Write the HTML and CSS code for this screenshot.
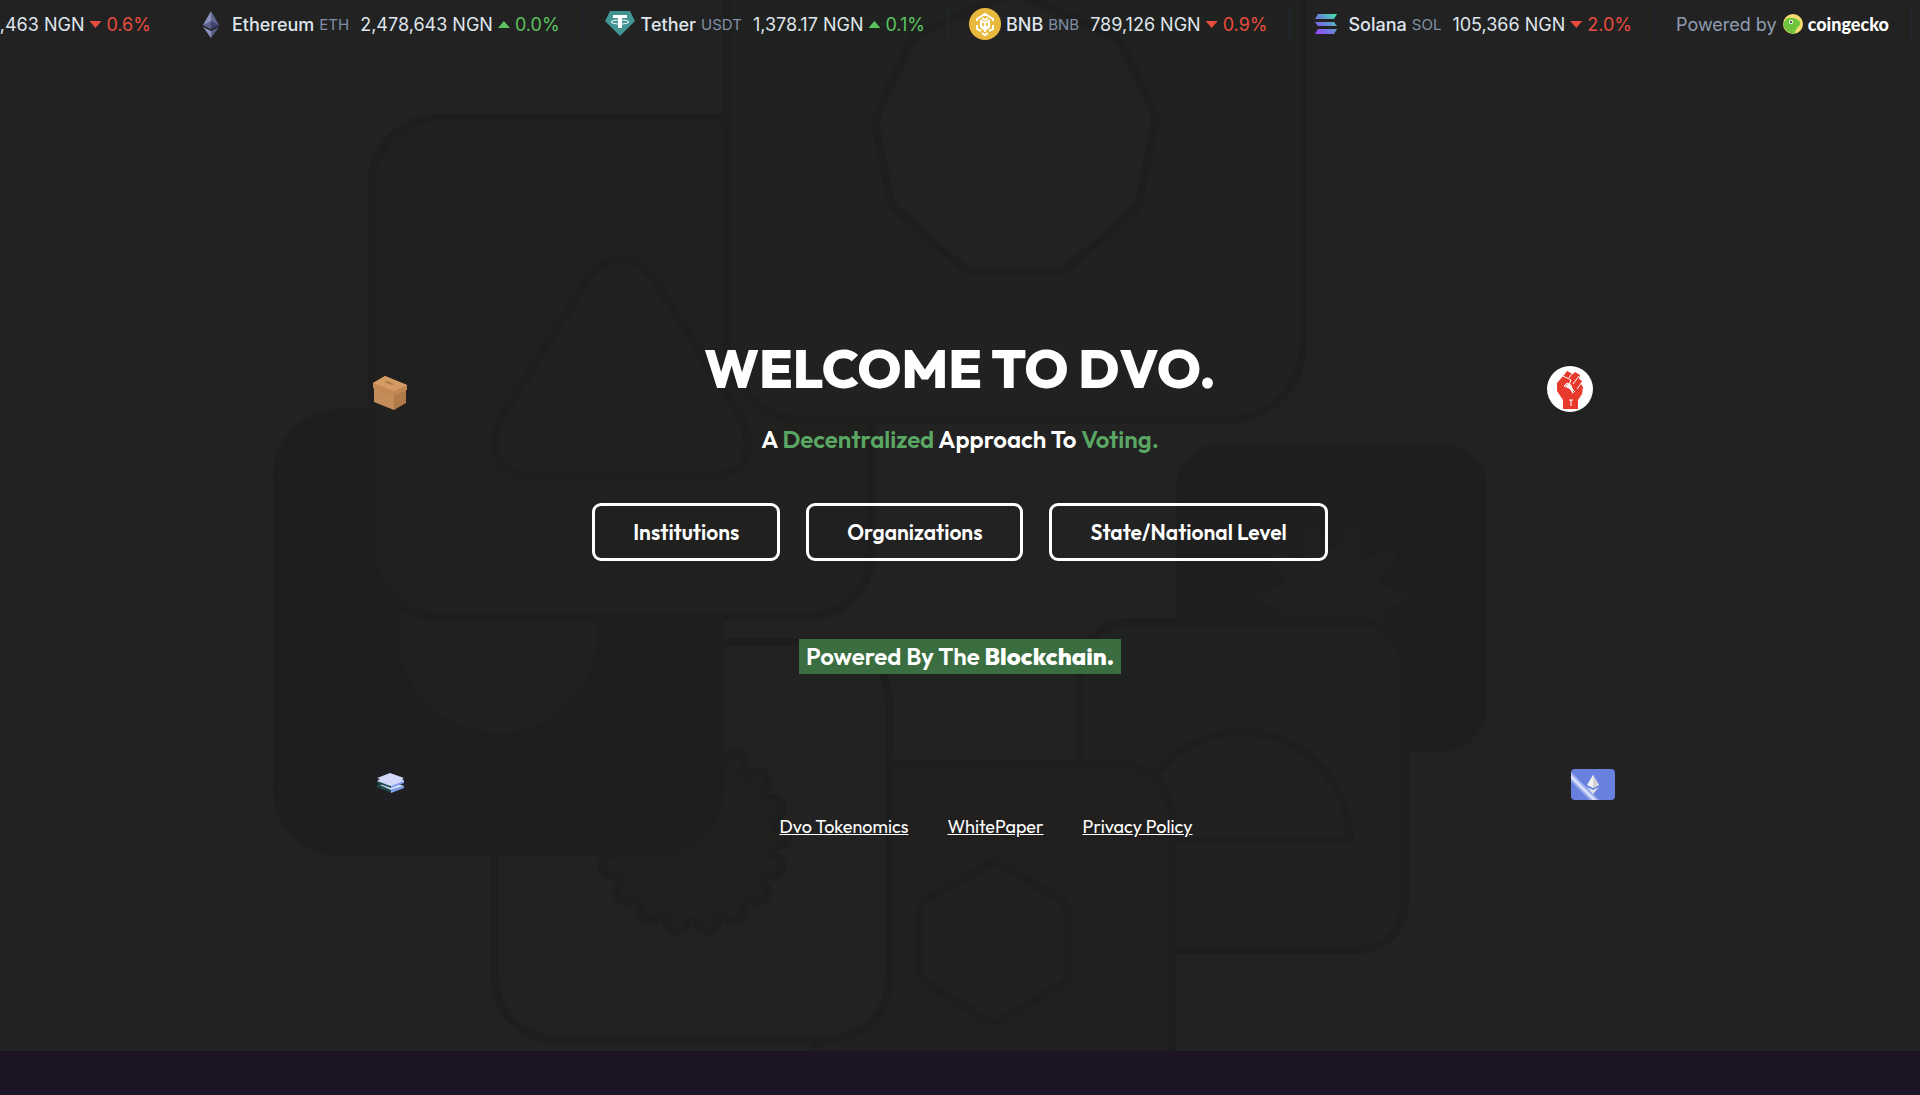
FILE: index.html
```html
<!DOCTYPE html>
<html lang="en">
<head>
    <meta charset="UTF-8">
    <meta name="viewport" content="width=device-width, initial-scale=1.0">
    <title>DVO</title>
    <link rel="stylesheet" href="styles.css">
</head>
<body>
    <div class="hero">
        <!-- background shapes -->
        <svg class="hero-bg" viewBox="0 0 1920 1051" preserveAspectRatio="xMidYMid slice" aria-hidden="true">
            <g stroke="#1e1e1e" stroke-width="8" stroke-linejoin="round">
                <rect x="1180" y="448" width="303" height="299" rx="40" fill="#1f1f1f"/>
                <polygon transform="translate(1332 598)" fill="#20201e" paint-order="stroke" points="84,0 46,15 68,49 28,39 26,80 0,48 -26,80 -28,39 -68,49 -46,15 -84,0 -46,-15 -68,-49 -28,-39 -26,-80 0,-48 26,-80 28,-39 68,-49 46,-15"/>
                <rect x="1080" y="622" width="325" height="328" rx="48" fill="#202221"/>
                <path d="M1134 841A108 109 0 0 1 1350 841Z" fill="#212121"/>
                <rect x="814" y="763" width="358" height="400" rx="56" fill="#21201e"/>
                <path d="M994 861L1062 900Q1067 904 1067 910V972Q1067 979 1062 983L1000 1021Q994 1024 988 1021L926 983Q920 979 920 972V910Q920 904 926 900Z" fill="#202221"/>
                <rect x="495" y="642" width="394" height="397" rx="60" fill="#222222"/>
                <g fill="none" stroke-linecap="round">
                    <circle cx="692" cy="837" r="86" pathLength="180" stroke-width="28" stroke-dasharray="0 10"/>
                    <circle cx="692" cy="837" r="83"/>
                    <circle cx="692" cy="837" r="85" pathLength="180" stroke="#20201e" stroke-width="14" stroke-dasharray="0 10"/>
                </g>
                <circle cx="692" cy="837" r="80" fill="#20201e" stroke="none"/>
                <rect x="277" y="413" width="443" height="439" rx="64" fill="#1f1f22"/>
                <circle cx="498" cy="633" r="104" fill="#202020"/>
                <rect x="372" y="118" width="500" height="499" rx="66" fill="#20201e"/>
                <path d="M586 282Q621 236 656 282L742 420Q762 474 708 476H534Q482 474 500 420Z" fill="#20221f"/>
                <rect x="727" y="-160" width="576" height="580" rx="76" fill="#20221f"/>
                <path d="M1015 -8L1112 35Q1120 42 1124 50L1153 110Q1156 116 1155 122L1140 198Q1139 206 1133 211L1070 266Q1064 271 1056 271H975Q967 271 961 266L898 211Q892 206 890 198L876 128Q875 120 878 112L907 50Q911 40 919 33Z" fill="#222222"/>
            </g>
        </svg>

        <header class="ticker">
            <a class="coin" href="#">
                <span class="price">2,463 NGN</span>
                <span class="change down">0.6%</span>
            </a>
            <a class="coin" href="#">
                <svg class="coin-icon" viewBox="0 0 32 32" aria-hidden="true">
                    <path d="M16 3L8 17L16 21Z" fill="#8a92bd"/>
                    <path d="M16 3L24 17L16 21Z" fill="#62688f"/>
                    <path d="M8 17L16 13V21Z" fill="#5a6088"/>
                    <path d="M24 17L16 13V21Z" fill="#3d4270"/>
                    <path d="M8 19L16 23V30Z" fill="#8a92bd"/>
                    <path d="M24 19L16 23V30Z" fill="#5a6088"/>
                </svg>
                <span class="name">Ethereum</span>
                <span class="symbol">ETH</span>
                <span class="price">2,478,643 NGN</span>
                <span class="change up">0.0%</span>
            </a>
            <a class="coin" href="#">
                <svg class="coin-icon" viewBox="0 0 32 32" aria-hidden="true">
                    <path d="M6 3H26L31 13L16 28L1 13Z" fill="#439594"/>
                    <path d="M9 7H23V10H18V20H14V10H9Z" fill="#fff"/>
                    <ellipse cx="16" cy="14" rx="9" ry="2" fill="none" stroke="#fff"/>
                </svg>
                <span class="name">Tether</span>
                <span class="symbol">USDT</span>
                <span class="price">1,378.17 NGN</span>
                <span class="change up">0.1%</span>
            </a>
            <a class="coin" href="#">
                <svg class="coin-icon" viewBox="0 0 32 32" aria-hidden="true">
                    <circle cx="16" cy="16" r="16" fill="#e8b93c"/>
                    <g fill="none" stroke="#fff" stroke-width="2">
                        <path d="M11 9L16 6L21 9M8 13V11L11 9M24 13V11L21 9M8 17V21L12 23M24 17V21L20 23M13 25L16 27L19 25"/>
                        <path d="M11 12L16 15L21 12M11 17L16 20L21 17M16 15V24M12 12V19L16 22L20 19V12M13 10L16 12L19 10"/>
                    </g>
                </svg>
                <span class="name">BNB</span>
                <span class="symbol">BNB</span>
                <span class="price">789,126 NGN</span>
                <span class="change down">0.9%</span>
            </a>
            <a class="coin" href="#">
                <svg class="coin-icon" viewBox="0 0 32 32" aria-hidden="true">
                    <defs>
                        <linearGradient id="sol" gradientUnits="userSpaceOnUse" x1="6" y1="26" x2="25" y2="6">
                            <stop offset="0" stop-color="#9945ff"/>
                            <stop offset=".5" stop-color="#6586d8"/>
                            <stop offset="1" stop-color="#48e8a8"/>
                        </linearGradient>
                    </defs>
                    <path d="M7 6H26L23 11H4ZM4 14H23L26 18H7ZM7 21H26L23 26H4Z" fill="url(#sol)"/>
                </svg>
                <span class="name">Solana</span>
                <span class="symbol">SOL</span>
                <span class="price">105,366 NGN</span>
                <span class="change down">2.0%</span>
            </a>
            <a class="coin powered" href="#">
                Powered by
                <svg class="gecko" viewBox="0 0 20 20" aria-hidden="true">
                    <circle cx="10" cy="10" r="10" fill="#f8dc70"/>
                    <path d="M2 7Q4 3 9 4Q14 4 17 8Q18 11 14 14Q12 16 12 20Q1 19 0 9Z" fill="#6ec53d"/>
                    <circle cx="8" cy="8" r="2" fill="#fff"/>
                    <circle cx="8" cy="8" r="1" fill="#222"/>
                </svg>
                <strong>coingecko</strong>
            </a>
        </header>

        <main class="hero-content">
            <div class="side side-left" aria-hidden="true">
                <svg width="34" height="34" viewBox="0 0 34 34">
                    <path d="M1 10L21 18V34L1 26Z" fill="#c48c58"/>
                    <path d="M21 18L33 11V27L21 34Z" fill="#b07a48"/>
                    <path d="M0 7L12 0L34 9V14L21 20L0 12Z" fill="#c28853"/>
                    <path d="M0 7L12 0L34 9L21 15Z" fill="#d59b65"/>
                    <path d="M11 6L14 5L21 8L19 9Z" fill="#ad7746"/>
                </svg>
                <svg width="27" height="20" viewBox="0 0 27 20">
                    <path d="M0 12L13 8L27 12V15L14 20L0 14Z" fill="#204848"/>
                    <path d="M3 12L14 9L27 13L14 17Z" fill="#d0daf8"/>
                    <path d="M14 17L27 13V15L14 20Z" fill="#7f9cf0"/>
                    <path d="M0 8L14 13V15L0 10Z" fill="#204848"/>
                    <path d="M14 12L27 7V10L14 15Z" fill="#7f9cf0"/>
                    <path d="M0 5L13 0L27 5L25 6L27 8L14 13L0 8L3 6Z" fill="#d3d8fb"/>
                </svg>
            </div>

            <div class="center">
                <h1>WELCOME TO DVO.</h1>
                <p class="tagline">A <span>Decentralized</span> Approach To <span>Voting.</span></p>
                <div class="buttons">
                    <button type="button">Institutions</button>
                    <button type="button">Organizations</button>
                    <button type="button">State/National Level</button>
                </div>
                <p class="badge">Powered By The <b>Blockchain.</b></p>
                <nav class="links">
                    <a href="#">Dvo Tokenomics</a>
                    <a href="#">WhitePaper</a>
                    <a href="#">Privacy Policy</a>
                </nav>
            </div>

            <div class="side side-right" aria-hidden="true">
                <svg class="fist" width="46" height="46" viewBox="0 0 46 46">
                    <circle cx="23" cy="23" r="23" fill="#fff"/>
                    <path d="M17 9L20 5L26 8L28 6L33 9L32 13L35 15L34 18L36 21L35 28L31 34V43H16V34L10 25V17Z" fill="#e83a2c"/>
                    <path d="M16 10L24 14L22 19L26 24L28 26M22 12L26 6M26 18L32 10M30 23L35 16M17 20L20 17L24 19L26 27L24 23L17 20M24 34V40M22 34H26" fill="none" stroke="#fff" stroke-width="1"/>
                    <path d="M18 19L22 18L26 23L26 28L23 23Z" fill="#fff"/>
                </svg>
                <svg class="card" width="44" height="31" viewBox="0 0 44 31">
                    <rect width="44" height="31" rx="4" fill="#6880de"/>
                    <path d="M0 3L28 31H19L0 12Z" fill="#a4b3ef"/>
                    <path d="M0 6L25 31H22L0 9Z" fill="#e0e6fc"/>
                    <path d="M22 6L28 16L22 19L16 16Z" fill="#f2f2f2"/>
                    <path d="M22 6L28 16L22 19Z" fill="#d2d2d2"/>
                    <path d="M16 18L22 21L28 18L22 25Z" fill="#e4e4e4"/>
                </svg>
            </div>
        </main>
    </div>
</body>
</html>
```

FILE: styles.css
```css
* {
    box-sizing: border-box;
}

body {
    margin: 0;
    min-height: 100vh;
    background-color: #1d1526;
    color: white;
    font-family: Outfit, Lato, sans-serif;
}

.hero {
    position: relative;
    background-color: #222222;
    padding-bottom: 211px;
    overflow: hidden;
}

.hero-bg {
    position: absolute;
    top: 0;
    left: 0;
    width: 100%;
    height: 100%;
}

/* Ticker */
.ticker {
    position: relative;
    display: flex;
    justify-content: flex-end;
    padding: 8px 8px 0 0;
    overflow: hidden;
    font-family: Inter, sans-serif;
    font-size: 18px;
}

.coin {
    display: flex;
    flex-shrink: 0;
    align-items: center;
    height: 32px;
    padding: 0 22px 0 21px;
    border-right: 1px solid #1e2733;
    color: #dfe5ec;
    text-decoration: none;
    white-space: nowrap;
}

.coin-icon {
    width: 32px;
    height: 32px;
    margin-right: 5px;
}

.name {
    font-weight: 500;
}

.symbol {
    margin: 0 11px 0 5px;
    color: #8090a8;
    font-size: 15px;
}

.change::before {
    content: "";
    display: inline-block;
    width: 12px;
    height: 7px;
    margin: 0 5px 2px;
    background-color: currentColor;
    vertical-align: middle;
}

.up {
    color: #5cc25c;
}

.up::before {
    clip-path: polygon(50% 0, 100% 100%, 0 100%);
}

.down {
    color: #e84c3f;
}

.down::before {
    clip-path: polygon(0 0, 100% 0, 50% 100%);
}

.powered {
    color: #8f9db3;
}

.powered strong {
    color: white;
    font-family: Lato, sans-serif;
    font-weight: 900;
}

.gecko {
    width: 20px;
    height: 20px;
    margin: 0 5px 0 6px;
}

/* Content */
.hero-content {
    position: relative;
    display: grid;
    grid-template-columns: 1fr auto 1fr;
    padding-top: 292px;
}

.side {
    display: flex;
    flex-direction: column;
}

.side-left {
    align-items: center;
    justify-self: start;
    gap: 363px;
    padding-top: 44px;
    margin-left: 373px;
}

.side-right {
    justify-self: end;
    width: 68px;
    gap: 357px;
    padding-top: 34px;
    margin-right: 305px;
}

.card {
    align-self: flex-end;
}

.center {
    display: flex;
    flex-direction: column;
    align-items: center;
}

h1 {
    margin: 0;
    font-size: 54px;
    font-weight: 800;
    line-height: 72px;
}

.tagline {
    margin: 19px 0 48px;
    font-size: 24px;
    font-weight: 600;
    line-height: 32px;
}

.tagline span {
    color: #5aa764;
}

.buttons {
    display: flex;
    gap: 26px;
}

.buttons button {
    height: 58px;
    padding: 0 38px;
    border: 3px solid white;
    border-radius: 9px;
    background: none;
    color: white;
    font-family: inherit;
    font-size: 21px;
    font-weight: 600;
}

.badge {
    margin: 78px 0 0;
    padding: 0 7px;
    background-color: #3a6e41;
    font-size: 24px;
    font-weight: 600;
    line-height: 35px;
}

.badge b {
    font-weight: 800;
}

.links {
    display: flex;
    gap: 39px;
    margin-top: 140px;
    padding-left: 52px;
    font-size: 18px;
    line-height: 26px;
}

.links a {
    color: white;
}
```
